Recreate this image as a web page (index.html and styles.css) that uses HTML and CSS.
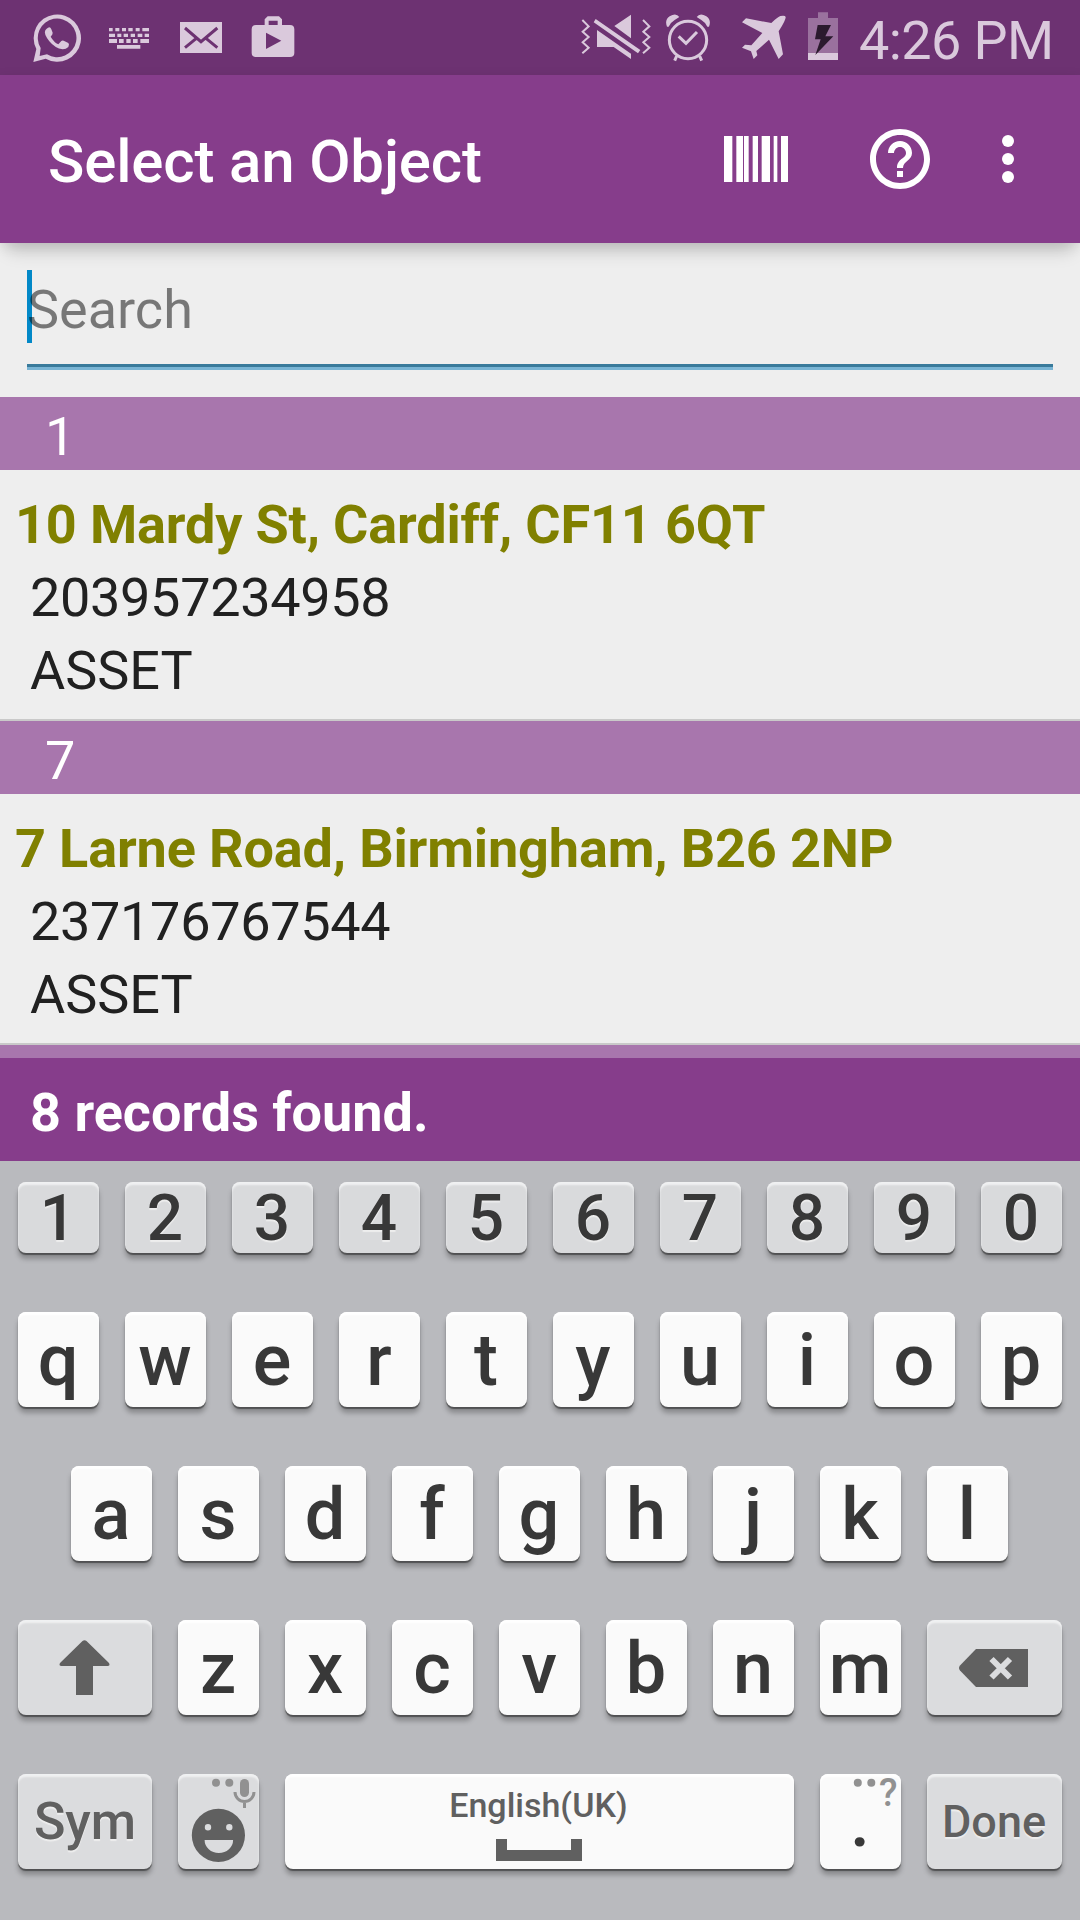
FILE: index.html
```html
<!DOCTYPE html>
<html lang="en">
<head>
<meta charset="utf-8">
<title>Select an Object</title>
<link rel="stylesheet" href="styles.css">
</head>
<body>
<div class="screen">
  <div class="status-bar">
    <div class="status-left">
      <svg class="icon" width="49" height="75" viewBox="99 0 147 225"><path fill-rule="evenodd" d="M100 186L109 147A71 71 0 1 1 137 176ZM119 168L122 144A58 58 0 1 1 141 163Z"/><path d="M140 86Q150 76 154 88L158 98Q159 103 152 110Q162 127 175 133L184 123Q187 120 191 122L205 129Q209 132 205 141Q198 148 188 148Q165 145 148 124Q130 101 136 91Z"/></svg>
      <svg class="icon" width="40" height="75" viewBox="327 0 120 225"><path d="M327 84h11v10h-11zM346 84h12v10h-12zM366 84h12v10h-12zM385 84h13v10h-13zM407 84h12v10h-12zM427 84h20v10h-20zM327 101h18v10h-18zM352 101h12v10h-12zM371 101h13v10h-13zM392 101h13v10h-13zM413 101h14v10h-14zM434 101h13v10h-13zM327 117h24v12h-24zM357 117h14v12h-14zM379 117h13v12h-13zM399 117h14v12h-14zM421 117h26v12h-26zM351 135h70v11h-70z"/></svg>
      <svg class="icon" width="42" height="75" viewBox="540 0 126 225"><path d="M540 66h126v93H540z"/><path class="mail-lines" d="M555 84L603 125L652 84M555 143L588 116M652 143L619 116"/></svg>
      <svg class="icon" width="44" height="75" viewBox="753 0 132 225"><path fill-rule="evenodd" d="M768 75H794V58L803 49H837L846 58V75H870Q883 75 883 88V159Q883 171 870 171H768Q755 171 755 159V88Q755 75 768 75ZM806 62V75H833V62ZM798 98V147L844 122Z"/></svg>
    </div>
    <div class="status-right">
      <svg class="icon" width="70" height="75" viewBox="63 0 210 225"><path class="zigzag" d="M67 60L86 79L68 95L86 111L68 127L86 143L67 160M249 60L268 79L250 95L268 111L250 127L268 143L249 160"/><path d="M163 78L213 44V115ZM111 90L213 161V177L161 141H111ZM107 57L241 150L234 160L101 67Z"/></svg>
      <svg class="icon" width="46" height="75" viewBox="315 0 138 225"><g class="clock-lines"><circle cx="384" cy="120" r="56"/><path d="M356 109L378 130L411 96"/><path d="M350 168L344 182M419 168L425 182"/></g><path d="M321 80Q313 60 329 49Q348 37 358 51L344 60Q332 67 326 80ZM447 80Q455 60 439 49Q420 37 410 51L424 60Q436 67 442 80Z"/></svg>
      <svg class="icon" width="46" height="75" viewBox="543 0 138 225"><path d="M546 67L558 55L634 69Q651 52 661 48Q676 45 677 51Q678 60 656 94L669 163L656 177L627 119L589 153L592 166L581 177L573 154L546 143L555 134L574 136L607 99Z"/></svg>
      <svg class="icon" width="30" height="75" viewBox="744 0 90 225"><path class="battery-body" d="M774 37h30v17h30v126h-90V54h30z"/><path d="M744 159h90v21h-90z"/><path class="battery-bolt" d="M773 75H813L796 109H820L766 165L782 118H765Z"/></svg>
      <span class="clock">4:26 PM</span>
    </div>
  </div>

  <div class="app-bar">
    <h1 class="app-title">Select an Object</h1>
    <div class="actions">
      <svg class="barcode" width="64" height="46" viewBox="492 408 192 138"><path d="M492 408h25v138h-25zM529 408h20v138h-20zM552 408h14v138h-14zM578 408h16v138h-16zM605 408h25v138h-25zM641 408h11v138h-11zM663 408h21v138h-21z"/></svg>
      <svg class="help" width="72" height="72" viewBox="0 0 24 24"><path d="M11 18h2v-2h-2v2zm1-16C6.48 2 2 6.48 2 12s4.48 10 10 10 10-4.480 10-10S17.520 2 12 2zm0 18c-4.410 0-8-3.590-8-8s3.590-8 8-8 8 3.590 8 8-3.590 8-8 8zm0-14c-2.210 0-4 1.790-4 4h2c0-1.100.900-2 2-2s2 .900 2 2c0 2-3 1.750-3 5h2c0-2.250 3-2.500 3-5 0-2.210-1.790-4-4-4z"/></svg>
      <svg class="more" width="12" height="48" viewBox="0 0 12 48"><circle cx="6" cy="6" r="6"/><circle cx="6" cy="24" r="6"/><circle cx="6" cy="42" r="6"/></svg>
    </div>
  </div>

  <div class="search">
    <div class="search-field"><span class="caret"></span><span class="placeholder">Search</span></div>
  </div>

  <div class="list">
    <div class="section">1</div>
    <div class="item">
      <div class="item-title">10 Mardy St, Cardiff, CF11 6QT</div>
      <div class="item-line item-number">203957234958</div>
      <div class="item-line">ASSET</div>
    </div>
    <div class="section">7</div>
    <div class="item">
      <div class="item-title">7 Larne Road, Birmingham, B26 2NP</div>
      <div class="item-line item-number">237176767544</div>
      <div class="item-line">ASSET</div>
    </div>
    <div class="section section-cut"></div>
  </div>

  <div class="footer">8 records found.</div>

  <div class="keyboard">
    <div class="row">
      <div class="key digit">1</div><div class="key digit">2</div><div class="key digit">3</div><div class="key digit">4</div><div class="key digit">5</div><div class="key digit">6</div><div class="key digit">7</div><div class="key digit">8</div><div class="key digit">9</div><div class="key digit">0</div>
    </div>
    <div class="row">
      <div class="key">q</div><div class="key">w</div><div class="key">e</div><div class="key">r</div><div class="key">t</div><div class="key">y</div><div class="key">u</div><div class="key">i</div><div class="key">o</div><div class="key">p</div>
    </div>
    <div class="row row-inset">
      <div class="key">a</div><div class="key">s</div><div class="key">d</div><div class="key">f</div><div class="key">g</div><div class="key">h</div><div class="key">j</div><div class="key">k</div><div class="key">l</div>
    </div>
    <div class="row">
      <div class="key func wide">
        <svg width="134" height="95" viewBox="0 0 134 95"><path d="M64.500 21Q66.500 19.300 68.500 21L91 43Q92.500 46 89.500 46H75V75H58V46H43.500Q40.500 46 42 43Z"/></svg>
      </div>
      <div class="key">z</div><div class="key">x</div><div class="key">c</div><div class="key">v</div><div class="key">b</div><div class="key">n</div><div class="key">m</div>
      <div class="key func widest">
        <svg width="135" height="95" viewBox="0 0 135 95"><path d="M49 29H101V67H49L33 50.500Q31 48 33 45.500Z"/><path class="delete-cross" d="M64.500 39L83 57.500M83 39L64.500 57.500"/></svg>
      </div>
    </div>
    <div class="row">
      <div class="key func wide sym">Sym</div>
      <div class="key func">
        <svg width="81" height="95" viewBox="0 0 81 95"><path fill-rule="evenodd" d="M40.400 34.700A26.600 26.600 0 1 1 40.400 87.900A26.600 26.600 0 1 1 40.400 34.700ZM26.600 66H55.100A14.200 13 0 0 1 26.600 66ZM26.800 53.300A3.200 3.200 0 1 0 33.200 53.300A3.200 3.200 0 1 0 26.800 53.300ZM48.100 53.300A3.200 3.200 0 1 0 54.500 53.300A3.200 3.200 0 1 0 48.100 53.300Z"/><g class="hint"><circle cx="38" cy="8.700" r="4"/><circle cx="51.300" cy="8.700" r="4"/><rect x="62" y="5" width="9" height="18" rx="4.500"/><path class="mic-stand" d="M57 18A9.500 9.500 0 0 0 76 18M66.500 28V34"/></g></svg>
      </div>
      <div class="key space">
        <span class="language">English(UK)</span>
        <svg width="86" height="22" viewBox="0 0 86 22"><path d="M0 0H11V11H75V0H86V22H0Z"/></svg>
      </div>
      <div class="key period">.
        <svg class="period-dots" width="81" height="20" viewBox="0 0 81 20"><g class="hint"><circle cx="37.800" cy="8.700" r="4"/><circle cx="51.300" cy="8.700" r="4"/></g></svg>
        <span class="period-hint">?</span>
      </div>
      <div class="key func widest done">Done</div>
    </div>
  </div>
</div>
</body>
</html>
```
FILE: styles.css
```css
* {
  box-sizing: border-box;
}

body {
  margin: 0;
  font-family: Roboto, sans-serif;
  font-size: 54px;
  color: #212121;
}

svg {
  display: block;
  flex: none;
}

.screen {
  width: 1080px;
  height: 1920px;
  overflow: hidden;
  display: flex;
  flex-direction: column;
  background: #eee;
}

/* Status bar */
.status-bar {
  flex: none;
  height: 75px;
  display: flex;
  justify-content: space-between;
  padding: 0 0 0 33px;
  background: #6d3272;
  color: #dac9dc;
}

.status-left,
.status-right {
  display: flex;
}

.status-left {
  column-gap: 29px;
}

.status-left .icon:nth-child(2) {
  margin: 0 2px 0 -2px;
}

.status-right .icon {
  margin-right: 21px;
}

.status-right .icon:first-child {
  margin-right: 14px;
}

.status-right .icon:nth-child(2) {
  margin-right: 30px;
}

.icon {
  fill: #dac9dc;
}

.mail-lines {
  fill: none;
  stroke: #6d3272;
  stroke-width: 9;
}

.zigzag {
  fill: none;
  stroke: #dac9dc;
  stroke-width: 6;
}

.clock-lines {
  fill: none;
  stroke: #dac9dc;
  stroke-width: 9;
}

.battery-body {
  fill: #9a719e;
}

.battery-bolt {
  fill: #2b1a2e;
}

.clock {
  width: 221px;
  padding-top: 7px;
  line-height: 68px;
  letter-spacing: -.6px;
  white-space: nowrap;
}

/* App bar */
.app-bar {
  position: relative;
  flex: none;
  height: 168px;
  display: flex;
  align-items: center;
  justify-content: space-between;
  padding: 0 66px 0 48px;
  background: #863d8b;
  box-shadow: 0 17px 16px -8px rgba(0, 0, 0, .15), 0 3px 12px rgba(0, 0, 0, .1);
}

.app-title {
  margin: 0;
  padding-top: 5px;
  font-size: 60px;
  font-weight: 500;
  letter-spacing: -.16px;
  color: #fff;
}

.actions {
  display: flex;
  align-items: center;
  fill: #fff;
}

.help {
  margin: 0 66px 0 76px;
}

/* Search */
.search {
  flex: none;
  height: 154px;
  padding: 27px 27px 0;
}

.search-field {
  position: relative;
  height: 100px;
  border-bottom: 3px solid #79b4d4;
  box-shadow: inset 0 -3px #397a9b;
}

.caret {
  position: absolute;
  left: 0;
  top: 0;
  width: 5px;
  height: 73px;
  background: #0288c7;
}

.placeholder {
  position: relative;
  display: block;
  padding-top: 6px;
  line-height: 67px;
  color: rgba(0, 0, 0, .5);
}

/* Result list */
.section {
  height: 73px;
  padding: 6px 0 0 45px;
  line-height: 67px;
  background: #a876ad;
  color: #fff;
}

.section-cut {
  height: 13px;
  padding: 0;
}

.item {
  height: 251px;
  padding: 18px 0 0 15px;
  line-height: 73px;
  border-bottom: 2px solid #c9c9c9;
}

.item-title {
  font-weight: 700;
  letter-spacing: -.15px;
  color: #808000;
}

.item-line {
  padding-left: 15px;
}

.item-number {
  letter-spacing: -.32px;
}

.footer {
  flex: none;
  height: 103px;
  padding: 7px 30px 0;
  line-height: 96px;
  font-weight: 700;
  background: #863d8b;
  color: #fff;
}

/* Keyboard */
.keyboard {
  flex: 1;
  display: flex;
  flex-direction: column;
  row-gap: 59px;
  padding: 21px 18px 0;
  background: #b9babe;
}

.row {
  display: flex;
  column-gap: 26px;
}

.row-inset {
  padding-left: 53px;
}

.key {
  position: relative;
  flex: none;
  width: 81px;
  height: 95px;
  padding: 2px 1px 0 0;
  line-height: 93px;
  font-size: 72px;
  font-weight: 500;
  text-align: center;
  color: #383838;
  background: #fafafa;
  border-radius: 8px;
  box-shadow: inset 0 3px 2px #fff, 0 2px 1px rgba(0, 0, 0, .42), 0 6px 5px rgba(0, 0, 0, .26);
}

.digit {
  height: 71px;
  line-height: 69px;
  font-size: 64px;
  background: #d9dadc;
  text-shadow: 0 2px 1px #eee;
  box-shadow: inset 0 3px 2px #f0f1f2, 0 2px 1px rgba(0, 0, 0, .42), 0 6px 5px rgba(0, 0, 0, .26);
}

.func {
  padding: 0;
  line-height: 95px;
  color: #606060;
  fill: #606060;
  background: #dbdcde;
  text-shadow: 0 2px 1px #eee;
  box-shadow: inset 0 3px 2px #f0f1f2, 0 2px 1px rgba(0, 0, 0, .42), 0 6px 5px rgba(0, 0, 0, .26);
}

.wide {
  width: 134px;
}

.widest {
  width: 135px;
}

.sym {
  font-size: 52px;
}

.done {
  padding-right: 1px;
  font-size: 45px;
}

.delete-cross {
  fill: none;
  stroke: #dbdcde;
  stroke-width: 6;
}

.hint {
  fill: #919191;
}

.mic-stand {
  fill: none;
  stroke: #919191;
  stroke-width: 3;
}

.space {
  width: 509px;
  display: flex;
  flex-direction: column;
  align-items: center;
  padding: 0 2px 0 0;
  fill: #606060;
}

.language {
  padding-bottom: 2px;
  line-height: 63px;
  font-size: 34px;
  color: #606060;
}

.period {
  padding-top: 1px;
}

.period-dots {
  position: absolute;
  left: 0;
  top: 0;
}

.period-hint {
  position: absolute;
  left: 59px;
  top: 0;
  line-height: 38px;
  font-size: 38px;
  color: #919191;
}
```
